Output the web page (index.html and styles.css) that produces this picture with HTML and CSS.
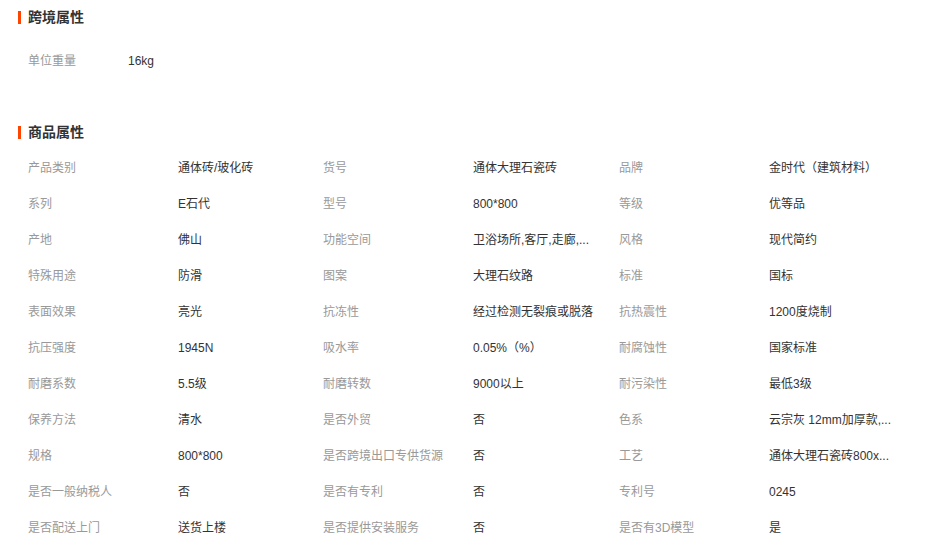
FILE: index.html
```html
<!DOCTYPE html>
<html lang="zh-CN">
<head>
<meta charset="utf-8">
<title>属性</title>
<link rel="stylesheet" href="styles.css">
</head>
<body>
<section class="section cross">
  <h2 class="section-title">跨境属性</h2>
  <div class="cross-row">
    <span class="label cross-label">单位重量</span>
    <span class="value">16kg</span>
  </div>
</section>

<section class="section goods">
  <h2 class="section-title">商品属性</h2>
  <div class="attr-grid">
    <span class="label">产品类别</span><span class="value">通体砖/玻化砖</span>
    <span class="label">货号</span><span class="value">通体大理石瓷砖</span>
    <span class="label">品牌</span><span class="value">金时代（建筑材料）</span>

    <span class="label">系列</span><span class="value">E石代</span>
    <span class="label">型号</span><span class="value">800*800</span>
    <span class="label">等级</span><span class="value">优等品</span>

    <span class="label">产地</span><span class="value">佛山</span>
    <span class="label">功能空间</span><span class="value">卫浴场所,客厅,走廊,...</span>
    <span class="label">风格</span><span class="value">现代简约</span>

    <span class="label">特殊用途</span><span class="value">防滑</span>
    <span class="label">图案</span><span class="value">大理石纹路</span>
    <span class="label">标准</span><span class="value">国标</span>

    <span class="label">表面效果</span><span class="value">亮光</span>
    <span class="label">抗冻性</span><span class="value">经过检测无裂痕或脱落</span>
    <span class="label">抗热震性</span><span class="value">1200度烧制</span>

    <span class="label">抗压强度</span><span class="value">1945N</span>
    <span class="label">吸水率</span><span class="value">0.05%（%）</span>
    <span class="label">耐腐蚀性</span><span class="value">国家标准</span>

    <span class="label">耐磨系数</span><span class="value">5.5级</span>
    <span class="label">耐磨转数</span><span class="value">9000以上</span>
    <span class="label">耐污染性</span><span class="value">最低3级</span>

    <span class="label">保养方法</span><span class="value">清水</span>
    <span class="label">是否外贸</span><span class="value">否</span>
    <span class="label">色系</span><span class="value">云宗灰 12mm加厚款,...</span>

    <span class="label">规格</span><span class="value">800*800</span>
    <span class="label">是否跨境出口专供货源</span><span class="value">否</span>
    <span class="label">工艺</span><span class="value">通体大理石瓷砖800x...</span>

    <span class="label">是否一般纳税人</span><span class="value">否</span>
    <span class="label">是否有专利</span><span class="value">否</span>
    <span class="label">专利号</span><span class="value">0245</span>

    <span class="label">是否配送上门</span><span class="value">送货上楼</span>
    <span class="label">是否提供安装服务</span><span class="value">否</span>
    <span class="label">是否有3D模型</span><span class="value">是</span>
  </div>
</section>
</body>
</html>
```

FILE: styles.css
```css
html, body {
  margin: 0;
  padding: 0;
  background: #ffffff;
}

body {
  font-family: "Liberation Sans", "Noto Sans CJK SC", sans-serif;
  font-size: 12px;
  color: #333333;
}

.section-title {
  margin: 0 0 0 18px;
  padding-left: 7px;
  border-left: 3px solid #ff4400;
  font-size: 14px;
  line-height: 13px;
  height: 13px;
  font-weight: bold;
  color: #333333;
}

.cross {
  padding-top: 11px;
}

.cross-row {
  display: flex;
  margin: 19px 0 0 28px;
  line-height: 36px;
}

.cross-label {
  width: 100px;
}

.goods {
  margin-top: 47px;
}

.attr-grid {
  display: grid;
  grid-template-columns: 150px 145px 150px 146px 150px 1fr;
  grid-auto-rows: 36px;
  line-height: 36px;
  margin: 11px 0 0 28px;
}

.label {
  color: #999999;
  white-space: nowrap;
}

.value {
  color: #333333;
  white-space: nowrap;
}
```
